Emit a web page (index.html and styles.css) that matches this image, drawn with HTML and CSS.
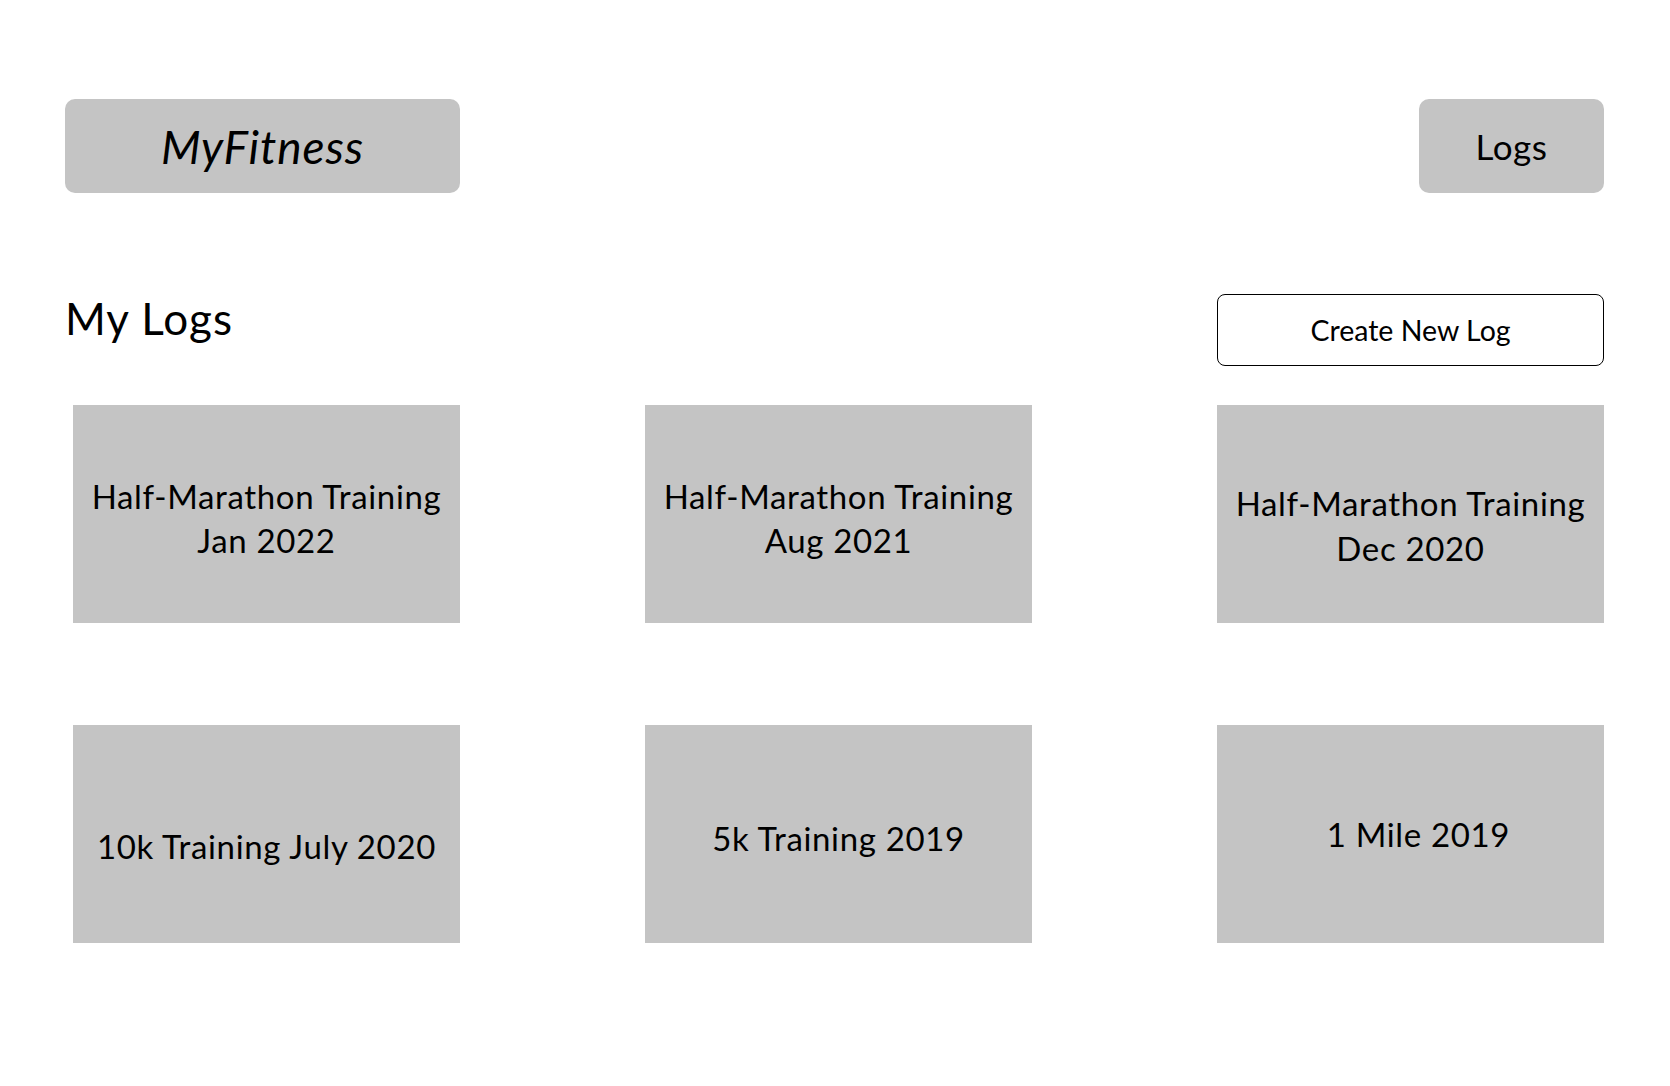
FILE: index.html
```html
<!DOCTYPE html>
<html lang="en">
<head>
<meta charset="utf-8">
<title>MyFitness - My Logs</title>
<link rel="stylesheet" href="styles.css">
</head>
<body>
<div class="page">
  <header class="topbar">
    <div class="brand">MyFitness</div>
    <nav class="nav-item">Logs</nav>
  </header>
  <section class="logs-head">
    <h1 class="logs-title">My Logs</h1>
    <button class="create-btn">Create New Log</button>
  </section>
  <section class="logs-grid">
    <div class="log-card log-card--a">Half-Marathon Training<br>Jan 2022</div>
    <div class="log-card log-card--a">Half-Marathon Training<br>Aug 2021</div>
    <div class="log-card log-card--c">Half-Marathon Training<br>Dec 2020</div>
    <div class="log-card log-card--d">10k Training July 2020</div>
    <div class="log-card log-card--a">5k Training 2019</div>
    <div class="log-card log-card--f">1 Mile 2019</div>
  </section>
</div>
</body>
</html>
```
FILE: styles.css
```css
* { box-sizing: border-box; }
html, body { margin: 0; padding: 0; background: #ffffff; }
body {
  font-family: "Lato", "Noto Sans", sans-serif;
  color: #000000;
  width: 1670px;
  height: 1086px;
  overflow: hidden;
}
.page {
  padding: 99px 66px 0 65px;
}
.topbar {
  display: flex;
  justify-content: space-between;
  align-items: stretch;
  height: 94px;
}
.brand {
  width: 395px;
  background: #c4c4c4;
  border-radius: 10px;
  display: flex;
  align-items: center;
  justify-content: center;
  font-style: italic;
  font-size: 46px;
  letter-spacing: 0.9px;
}
.nav-item {
  width: 185px;
  background: #c4c4c4;
  border-radius: 10px;
  display: flex;
  align-items: center;
  justify-content: center;
  font-size: 35px;
  letter-spacing: 0.6px;
}
.logs-head {
  display: flex;
  justify-content: space-between;
  align-items: flex-start;
  margin-top: 99px;
}
.logs-title {
  margin: 0;
  font-weight: 400;
  font-size: 44px;
  letter-spacing: 1px;
  line-height: 1.2;
}
.create-btn {
  margin-top: 2px;
  width: 387px;
  height: 72px;
  background: #ffffff;
  border: 1px solid #000000;
  border-radius: 8px;
  font-family: inherit;
  font-size: 28.5px;
  color: #000000;
  padding: 0;
}
.logs-grid {
  display: grid;
  grid-template-columns: repeat(3, 387px);
  justify-content: space-between;
  row-gap: 102px;
  margin-top: 39px;
  padding-left: 8px;
}
.log-card {
  height: 218px;
  background: #c4c4c4;
  display: flex;
  align-items: center;
  justify-content: center;
  text-align: center;
  font-size: 33px;
  letter-spacing: 0.65px;
  line-height: 44.5px;
}
.log-card--a { padding-top: 8px; }
.log-card--c { padding-top: 23px; }
.log-card--d { padding-top: 24px; }
.log-card--f { padding-left: 16px; }
```
